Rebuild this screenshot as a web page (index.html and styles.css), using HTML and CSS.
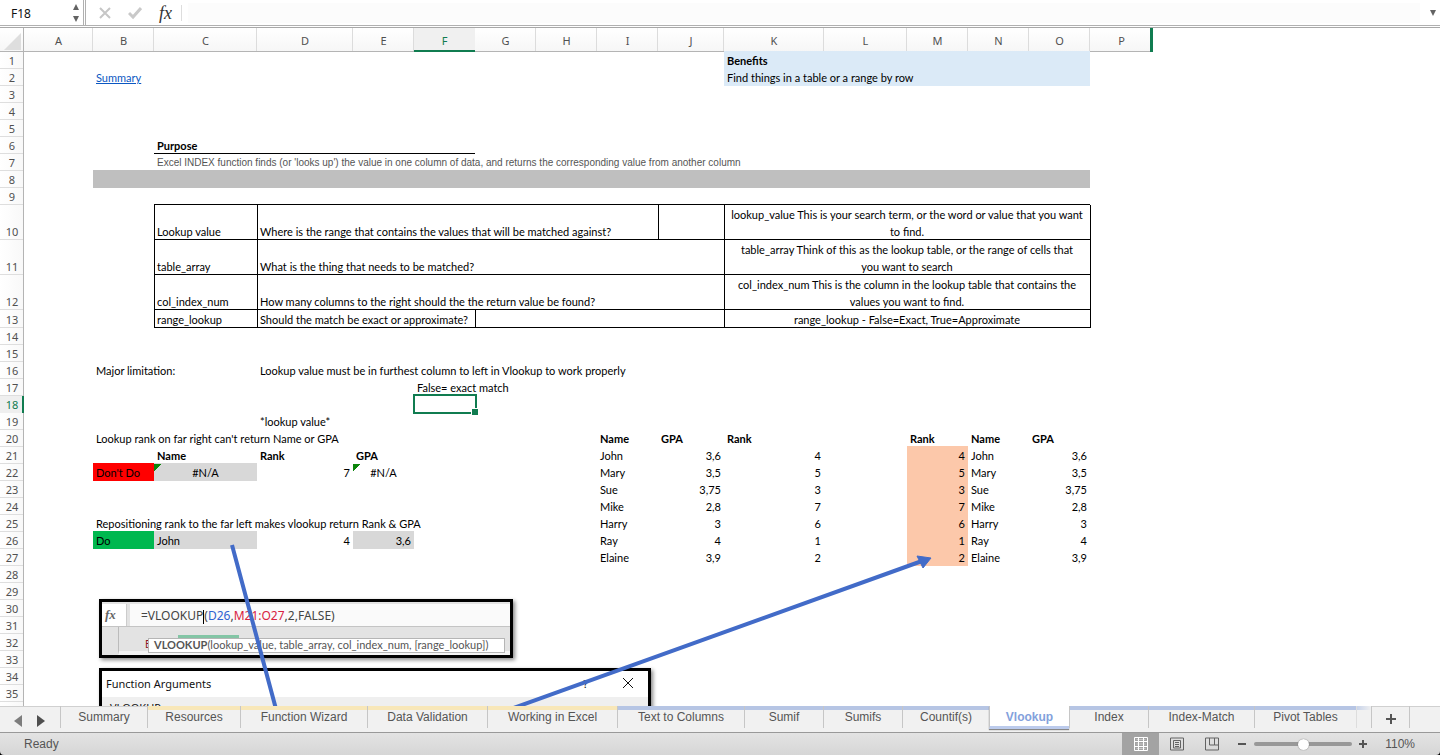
FILE: index.html
```html
<!DOCTYPE html>
<html lang="en">
<head>
<meta charset="utf-8">
<title>Vlookup</title>
<link rel="stylesheet" href="styles.css">
</head>
<body>
<div class="app">
<header class="formula-bar">
  <div class="name-box">
    <input class="name-input" type="text" value="F18" aria-label="Name box">
    <svg class="spin" viewBox="0 0 8 20" width="8" height="20" fill="#636363"><path d="M4 1 7 7H1zM4 19 7 13H1z"/></svg>
  </div>
  <button class="bar-btn" aria-label="Cancel"><svg viewBox="0 0 14 14" width="14" height="14" fill="none" stroke="#c6c6c6" stroke-width="2"><path d="M2 2l10 10M12 2L2 12"/></svg></button>
  <button class="bar-btn" aria-label="Enter"><svg viewBox="0 0 14 14" width="14" height="14" fill="none" stroke="#c9c9c9" stroke-width="3"><path d="M1 7l4 4 8-9"/></svg></button>
  <button class="bar-btn fx" aria-label="Insert function">fx</button>
  <input class="formula-input" type="text" aria-label="Formula">
  <button class="expand" aria-label="Expand formula bar"><svg viewBox="0 0 8 6" width="8" height="6" fill="#636363"><path d="M1 0h6L4 6z"/></svg></button>
</header>

<main class="sheet">
<table class="grid">
<colgroup><col class="w24"><col class="w69"><col class="w61"><col class="w103"><col class="w96"><col class="w61"><col class="w61"><col class="w61"><col class="w61"><col class="w61"><col class="w66"><col class="w100"><col class="w83"><col class="w61"><col class="w61"><col class="w61"><col class="w63"></colgroup>
<thead>
<tr><th class="corner" aria-label="Select all"><svg viewBox="0 0 17 17" width="17" height="17"><path d="M17 0v17H0z" fill="#dedede"/></svg></th><th>A</th><th>B</th><th>C</th><th>D</th><th>E</th><th class="on">F</th><th>G</th><th>H</th><th>I</th><th>J</th><th>K</th><th>L</th><th>M</th><th>N</th><th>O</th><th class="last">P</th></tr>
</thead>
<tbody>
<tr><th>1</th><td colspan="10"></td><td colspan="5" class="sky"><b>Benefits</b></td><td></td></tr>
<tr><th>2</th><td></td><td><a href="#summary">Summary</a></td><td colspan="8"></td><td colspan="5" class="sky flat">Find things in a table or a range by row</td><td></td></tr>
<tr><th>3</th><td colspan="16"></td></tr>
<tr><th>4</th><td colspan="16"></td></tr>
<tr><th>5</th><td colspan="16"></td></tr>
<tr><th>6</th><td colspan="2"></td><td colspan="4" class="under"><b>Purpose</b></td><td colspan="10"></td></tr>
<tr><th>7</th><td colspan="2"></td><td colspan="14" class="note">Excel INDEX function finds (or 'looks up') the value in one column of data, and returns the corresponding value from another column</td></tr>
<tr><th>8</th><td></td><td colspan="14" class="band"></td><td></td></tr>
<tr><th>9</th><td colspan="16"></td></tr>
<tr class="tall"><th>10</th><td colspan="2"></td><td class="tl">Lookup value</td><td colspan="6" class="tl">Where is the range that contains the values that will be matched against?</td><td class="tl"></td><td colspan="5" class="tl wrap">lookup_value This is your search term, or the word or value that you want<br>to find.</td><td class="l"></td></tr>
<tr class="tall"><th>11</th><td colspan="2"></td><td class="tl">table_array</td><td colspan="7" class="tl">What is the thing that needs to be matched?</td><td colspan="5" class="tl wrap">table_array Think of this as the lookup table, or the range of cells that<br>you want to search</td><td class="l"></td></tr>
<tr class="tall"><th>12</th><td colspan="2"></td><td class="tl">col_index_num</td><td colspan="7" class="tl">How many columns to the right should the the return value be found?</td><td colspan="5" class="tl wrap">col_index_num This is the column in the lookup table that contains the<br>values you want to find.</td><td class="l"></td></tr>
<tr class="mid"><th>13</th><td colspan="2"></td><td class="tl">range_lookup</td><td colspan="3" class="tl">Should the match be exact or approximate?</td><td colspan="4" class="tl"></td><td colspan="5" class="tl wrap">range_lookup - False=Exact, True=Approximate</td><td class="l"></td></tr>
<tr><th>14</th><td colspan="2"></td><td colspan="13" class="t"></td><td></td></tr>
<tr><th>15</th><td colspan="16"></td></tr>
<tr><th>16</th><td></td><td>Major limitation:</td><td></td><td>Lookup value must be in furthest column to left in Vlookup to work properly</td><td colspan="12"></td></tr>
<tr><th>17</th><td colspan="5"></td><td>False= exact match</td><td colspan="10"></td></tr>
<tr><th class="on">18</th><td colspan="5"></td><td class="selected"><span class="cursor"></span></td><td colspan="10"></td></tr>
<tr><th>19</th><td colspan="3"></td><td>*lookup value*</td><td colspan="12"></td></tr>
<tr><th>20</th><td></td><td>Lookup rank on far right can't return Name or GPA</td><td colspan="6"></td><td><b>Name</b></td><td><b>GPA</b></td><td><b>Rank</b></td><td></td><td><b>Rank</b></td><td><b>Name</b></td><td><b>GPA</b></td><td></td></tr>
<tr><th>21</th><td colspan="2"></td><td><b>Name</b></td><td><b>Rank</b></td><td><b>GPA</b></td><td colspan="3"></td><td>John</td><td class="n">3,6</td><td class="n">4</td><td></td><td class="n peach">4</td><td>John</td><td class="n">3,6</td><td></td></tr>
<tr><th>22</th><td></td><td class="red">Don't Do</td><td class="c grey flag">#N/A</td><td class="n">7</td><td class="c flag">#N/A</td><td colspan="3"></td><td>Mary</td><td class="n">3,5</td><td class="n">5</td><td></td><td class="n peach">5</td><td>Mary</td><td class="n">3,5</td><td></td></tr>
<tr><th>23</th><td colspan="8"></td><td>Sue</td><td class="n">3,75</td><td class="n">3</td><td></td><td class="n peach">3</td><td>Sue</td><td class="n">3,75</td><td></td></tr>
<tr><th>24</th><td colspan="8"></td><td>Mike</td><td class="n">2,8</td><td class="n">7</td><td></td><td class="n peach">7</td><td>Mike</td><td class="n">2,8</td><td></td></tr>
<tr><th>25</th><td></td><td>Repositioning rank to the far left makes vlookup return Rank &amp; GPA</td><td colspan="6"></td><td>Harry</td><td class="n">3</td><td class="n">6</td><td></td><td class="n peach">6</td><td>Harry</td><td class="n">3</td><td></td></tr>
<tr><th>26</th><td></td><td class="green">Do</td><td class="grey">John</td><td class="n">4</td><td class="n grey">3,6</td><td colspan="3"></td><td>Ray</td><td class="n">4</td><td class="n">1</td><td></td><td class="n peach">1</td><td>Ray</td><td class="n">4</td><td></td></tr>
<tr><th>27</th><td colspan="8"></td><td>Elaine</td><td class="n">3,9</td><td class="n">2</td><td></td><td class="n peach">2</td><td>Elaine</td><td class="n">3,9</td><td></td></tr>
<tr><th>28</th><td colspan="16"></td></tr>
<tr><th>29</th><td colspan="16"></td></tr>
<tr><th>30</th><td colspan="16"></td></tr>
<tr><th>31</th><td colspan="16"></td></tr>
<tr><th>32</th><td colspan="16"></td></tr>
<tr><th>33</th><td colspan="16"></td></tr>
<tr><th>34</th><td colspan="16"></td></tr>
<tr><th>35</th><td colspan="16"></td></tr>
<tr><th></th><td colspan="16"></td></tr>
</tbody>
</table>

<div class="float formula-pic">
  <div class="pic-row"><span class="pic-fx">fx</span><span class="pic-formula">=VLOOKUP<i class="caret"></i>(<span class="blue">D26</span>,<span class="crimson">M21:O27</span>,2,FALSE)</span></div>
  <div class="pic-heads"><span class="pic-e">E</span><span class="pic-green"></span><span class="pic-tip"><b>VLOOKUP</b>(lookup_value, table_array, col_index_num, [range_lookup])</span></div>
</div>
<div class="float dialog-pic">
  <div class="dialog-title"><span>Function Arguments</span><span class="dialog-help">?</span><svg viewBox="0 0 10 10" width="10" height="10" fill="none" stroke="#111"><path d="M0 0l10 10M10 0L0 10"/></svg></div>
  <div class="dialog-body">VLOOKUP</div>
</div>
<svg class="arrows" width="1100" height="680" viewBox="0 28 1100 680">
  <g fill="none" stroke="#426bc8" stroke-width="4"><path d="M232 545L276 709M508 710L922 561"/></g>
  <path d="M917 556L931 558L923 568z" fill="#426bc8" stroke="#426bc8"/>
</svg>
</main>

<nav class="tabs" aria-label="Sheets">
  <div class="tab-nav">
    <button aria-label="Previous sheet"><svg viewBox="0 0 8 12" width="8" height="12" fill="#7d7d7d"><path d="M8 0v12L0 6z"/></svg></button>
    <button aria-label="Next sheet"><svg viewBox="0 0 8 12" width="8" height="12" fill="#4f4f4f"><path d="M0 0v12L8 6z"/></svg></button>
  </div>
  <button class="tab t87">Summary</button>
  <button class="tab t93 gold">Resources</button>
  <button class="tab t127 gold">Function Wizard</button>
  <button class="tab t120 gold">Data Validation</button>
  <button class="tab t130 gold">Working in Excel</button>
  <button class="tab t127 azure">Text to Columns</button>
  <button class="tab t79 azure">Sumif</button>
  <button class="tab t79 azure">Sumifs</button>
  <button class="tab t87 azure">Countif(s)</button>
  <button class="tab t80 active">Vlookup</button>
  <button class="tab t79 azure">Index</button>
  <button class="tab t106 azure">Index-Match</button>
  <button class="tab t102 azure">Pivot Tables</button>
  <span class="fade"></span>
  <button class="add" aria-label="New sheet"><svg viewBox="0 0 10 10" width="10" height="10" stroke="#555" stroke-width="2"><path d="M5 0v10M0 5h10"/></svg></button>
  <span class="rest"></span>
</nav>

<footer class="status">
  <span class="ready">Ready</span>
  <button class="view on" aria-label="Normal view"><svg viewBox="0 0 14 14" width="14" height="14" fill="none" stroke="#fff"><path d="M.5 .5h13v13H.5zM.5 4.500h13M.5 9.500h13M4.500 .5v13M9.500 .5v13"/><path d="M2.500 2.500h9M2.500 7h9M2.500 11.500h9" stroke-opacity=".4"/></svg></button>
  <button class="view" aria-label="Page layout view"><svg viewBox="0 0 14 14" width="14" height="14" fill="none" stroke="#636363"><path d="M.5 1h13v12H.5zM3.500 3.500h7v7.500h-7zM5 5.500h4M5 7.500h4M5 9.500h4"/></svg></button>
  <button class="view" aria-label="Page break view"><svg viewBox="0 0 14 14" width="14" height="14" fill="none" stroke="#636363"><path d="M.5 1h13v12H.5zM4.500 1v7h5V1M9.500 8h4"/></svg></button>
  <button class="zoom-btn" aria-label="Zoom out"><svg viewBox="0 0 8 8" width="8" height="8" stroke="#555" stroke-width="2"><path d="M0 4h8"/></svg></button>
  <input class="zoom" type="range" min="0" max="100" value="51" aria-label="Zoom">
  <button class="zoom-btn" aria-label="Zoom in"><svg viewBox="0 0 8 8" width="8" height="8" stroke="#555" stroke-width="2"><path d="M0 4h8M4 0v8"/></svg></button>
  <span class="percent">110%</span>
</footer>
</div>
</body>
</html>
```
FILE: styles.css
```css
* { box-sizing: border-box; }
body { margin: 0; background: #000; font-family: Lato, sans-serif; }
button { border: 0; padding: 0; margin: 0; background: none; font: inherit; color: inherit; }
input { border: 0; padding: 0; margin: 0; outline: 0; font: inherit; }
svg { display: block; flex: none; }
.app { display: flex; flex-direction: column; height: 100vh; overflow: hidden; background: linear-gradient(#fff 740px, #000 740px); }

.formula-bar { display: flex; align-items: center; flex: none; height: 28px; padding-bottom: 1px; border-bottom: 1px solid #a8a8a8; background: linear-gradient(#fff 25px, #b0b0b0 25px, #b0b0b0 26px, #fff 26px); }
.name-box { display: flex; align-items: center; align-self: flex-start; justify-content: space-between; width: 86px; height: 25px; padding: 1px 3px 0 11px; border-right: 3px double #b0b0b0; }
.name-input { width: 56px; font-family: "Noto Sans", sans-serif; font-size: 12px; color: #111; }
.bar-btn { display: flex; align-items: center; justify-content: center; width: 30px; margin-left: 4px; }
.bar-btn + .bar-btn { margin-left: 0; }
.bar-btn.fx { width: 32px; height: 16px; border-right: 1px solid #ddd; font: italic 18px/16px "Liberation Serif", serif; color: #333; }
.formula-input { flex: 1; height: 20px; margin-left: 6px; background: #fcfcfc; font-size: 12px; }
.expand { width: 20px; padding-left: 9px; }

.sheet { position: relative; flex: 1; min-height: 0; overflow: hidden; background: #fff; }
.grid { table-layout: fixed; width: 1153px; border-collapse: separate; border-spacing: 0; font-size: 11px; line-height: 17px; color: #000; }
.w24 { width: 24px; } .w61 { width: 61px; } .w63 { width: 63px; } .w66 { width: 66px; } .w69 { width: 69px; } .w83 { width: 83px; } .w96 { width: 96px; } .w100 { width: 100px; } .w103 { width: 103px; }
.grid tr { height: 17px; }
.grid thead tr { height: 24px; }
.grid .tall { height: 35px; }
.grid .mid { height: 18px; }
.grid td, .grid th { padding: 0 3px; white-space: nowrap; }
.grid td { vertical-align: bottom; padding-top: 1px; line-height: 16px; }
.grid th { font-weight: 400; color: #505050; font-family: "Noto Sans", sans-serif; }
.grid thead th { padding: 0; line-height: 23px; background: linear-gradient(#fff, #f6f6f6); box-shadow: inset 0 -1px #b4b4b4, inset -1px 0 #dcdcdc; }
.grid thead .corner { padding: 2px 0 0 4px; box-shadow: inset -1px -1px #b4b4b4; }
.grid thead .on { background: #f0f0f0; color: #107c50; box-shadow: inset 0 -2px #107c50; }
.grid thead .last { box-shadow: inset -3px 0 #107c50, inset 0 -1px #b4b4b4; }
.grid tbody th { padding: 1px 0 0; vertical-align: bottom; line-height: 16px; background: linear-gradient(90deg, #fff, #f8f8f8); box-shadow: inset -1px 0 #b4b4b4, inset 0 -1px #dedede; }
.grid tbody .on { background: #efefef; color: #107c50; box-shadow: inset -2px 0 #107c50; }
.grid a { color: #0b57c2; }
.grid .sky { background: #dbeaf7; box-shadow: 0 -1px #dbeaf7; }
.grid .flat { box-shadow: none; }
.grid .band { background: #bfbfbf; box-shadow: 0 -1px #bfbfbf; }
.grid .under { box-shadow: inset 0 -1px #000; }
.grid .note { font-family: "Liberation Sans", sans-serif; font-size: 10px; color: #555; }
.grid .tl { box-shadow: 0 -1px #000, inset 1px 0 #000; }
.grid .t { box-shadow: 0 -1px #000; }
.grid .l { box-shadow: inset 1px 0 #000; }
.grid .wrap, .grid .c { text-align: center; }
.grid .tall .wrap { line-height: 17px; }
.grid .n { text-align: right; }
.grid .peach { background: #fcc8aa; box-shadow: 0 -1px #fcc8aa; }
.grid .red { background: #f00; box-shadow: 0 -1px #f00; }
.grid .green { background: #00b84f; box-shadow: 0 -1px #00b84f; }
.grid .grey { background: #d8d8d8; box-shadow: 0 -1px #d8d8d8; }
.grid .flag { background-image: linear-gradient(135deg, #0b860b 5px, transparent 5px); }
.grid .selected { position: relative; }
.cursor { position: absolute; inset: -2px -2px -1px -1px; border: 2px solid #107c50; }
.cursor::after { content: ""; position: absolute; right: -3px; bottom: -3px; width: 6px; height: 6px; background: #107c50; border: solid #fff; border-width: 1px 0 0 1px; }

.float { position: absolute; left: 99px; border: 3px solid #000; box-shadow: 2px 2px 4px #888; font-family: "Noto Sans", sans-serif; }
.formula-pic { top: 571px; width: 414px; height: 59px; background: #e3e3e3; font-size: 12px; color: #444; }
.pic-row { display: flex; gap: 3px; height: 25px; padding-top: 2px; border-bottom: 1px solid #c4c4c4; line-height: 23px; }
.pic-fx { width: 25px; padding-left: 3px; background: #fff; border-right: 1px solid #ccc; font: italic bold 13px/22px "Liberation Serif", serif; color: #666; }
.pic-formula { flex: 1; padding-left: 11px; background: #fafafa; }
.caret { display: inline-block; width: 1px; height: 14px; background: #000; vertical-align: middle; }
.blue { color: #2f62d0; } .crimson { color: #d8213f; }
.pic-heads { position: relative; height: 28px; margin-left: 16px; border-left: 1px solid #bbb; border-bottom: 4px solid #f4f4f4; }
.pic-e { position: absolute; left: 26px; top: 10px; line-height: 14px; font-size: 10px; color: #8a1020; }
.pic-green { position: absolute; left: 59px; top: 8px; width: 61px; height: 4px; background: #83c5a5; }
.pic-tip { position: absolute; left: 29px; top: 11px; width: 357px; height: 15px; padding-left: 5px; border: 1px solid #b5b5b5; background: #fff; line-height: 12px; font-family: Lato, sans-serif; font-size: 11px; white-space: nowrap; color: #555; }
.dialog-pic { top: 640px; width: 552px; height: 90px; background: #efefef; font-size: 11px; }
.dialog-title { display: flex; align-items: center; height: 26px; padding: 0 15px 2px 4px; background: #fff; color: #111; }
.dialog-help { margin-left: auto; padding-right: 35px; }
.dialog-body { padding: 3px 8px; line-height: 16px; color: #111; }
.arrows { position: absolute; left: 0; top: 0; }

.tabs { display: flex; flex: none; height: 27px; background: #f1f1f1; border-bottom: 1px solid #999; box-shadow: inset 0 1px #d0d0d0; font-family: "Liberation Sans", sans-serif; font-size: 12px; color: #555; }
.tab-nav { display: flex; gap: 15px; width: 60px; padding: 4px 0 0 14px; }
.tab { flex: none; height: 22px; border-left: 1px solid #c6c6c6; line-height: 20px; text-align: center; }
.t79 { width: 79px; } .t80 { width: 80px; } .t87 { width: 87px; } .t93 { width: 93px; } .t102 { width: 102px; } .t106 { width: 106px; } .t120 { width: 120px; } .t127 { width: 127px; } .t130 { width: 130px; }
.gold { background: linear-gradient(#f8e7b8 4px, transparent 4px); }
.azure { background: linear-gradient(#b6c5e4 4px, transparent 4px); }
.active { height: 23px; padding-top: 2px; background: #fff; border-bottom: 3px solid #bccbec; box-shadow: 0 1px 1px #888; line-height: 18px; font-weight: 700; color: #83a1dc; }
.fade { width: 15px; height: 22px; border-left: 1px solid #ddd; background: linear-gradient(90deg, #c8d3e9, #f1f1f1) no-repeat 0 0 / 15px 4px; }
.add { display: flex; align-items: center; justify-content: center; width: 38px; height: 22px; padding-top: 3px; border-left: 1px solid #c6c6c6; }
.rest { height: 22px; border-left: 1px solid #c6c6c6; }

.status { display: flex; align-items: center; flex: none; height: 22px; padding-right: 25px; background: linear-gradient(#e3e3e3, #d6d6d6); border-radius: 0 0 4px 4px; font-family: "Liberation Sans", sans-serif; font-size: 12px; color: #555; }
.ready { margin: 0 auto 0 24px; }
.view { display: flex; align-items: center; justify-content: center; width: 35px; height: 22px; }
.view.on { width: 37px; background: #a3a3a3; }
.zoom-btn { width: 8px; margin: 0 8px 0 7px; }
.view + .zoom-btn { margin-left: 9px; }
.zoom { appearance: none; width: 98px; height: 4px; border-radius: 2px; background: #989898; }
.zoom::-webkit-slider-thumb { appearance: none; width: 11px; height: 11px; border-radius: 50%; background: #fff; box-shadow: 0 0 1px #555; }
.percent { width: 30px; margin-left: 10px; text-align: right; }
```
